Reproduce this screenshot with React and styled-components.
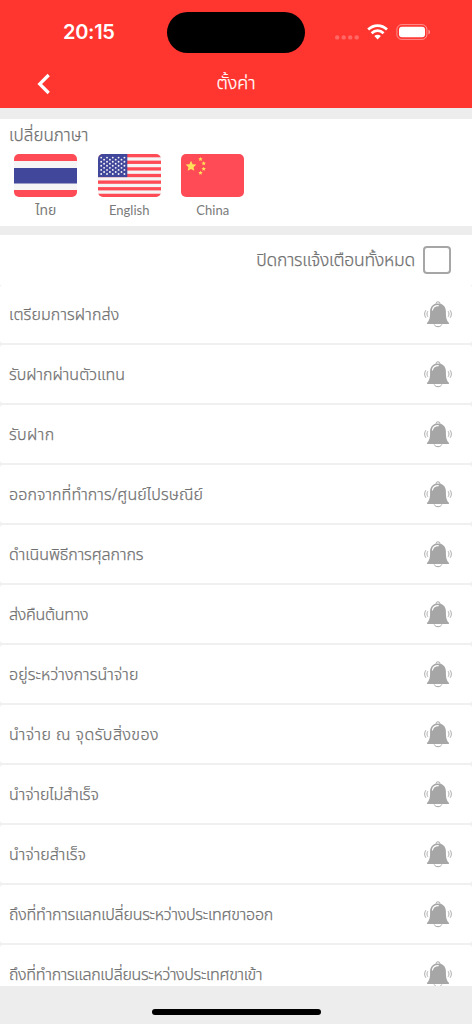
import React from 'react';
import styled, { createGlobalStyle } from 'styled-components';

const GlobalStyle = createGlobalStyle`
  * {
    box-sizing: border-box;
  }

  body {
    margin: 0;
    background: #ededed;
    font-family: 'Noto Sans Thai', 'Noto Sans', 'Lato', sans-serif;
    font-weight: 300;
    color: #707070;
  }
`;

const Screen = styled.div`
  display: flex;
  flex-direction: column;
  height: 1024px;
  overflow: hidden;
  background: #ededed;
`;

const Header = styled.header`
  flex: none;
  height: 107.5px;
  background: #ff3530;
  color: white;
`;

const StatusBar = styled.div`
  display: grid;
  grid-template-columns: 167px 138px 1fr;
  height: 65px;
`;

const Clock = styled.div`
  padding: 20px 0 0 63px;
  font: 600 20px/25px 'Inter', sans-serif;
  letter-spacing: -0.3px;
`;

const Island = styled.div`
  height: 41px;
  margin-top: 12px;
  border-radius: 21px;
  background: black;
`;

const StatusIcons = styled.svg`
  width: 100px;
  height: 20px;
  margin: 22px 0 0 29px;
`;

const TitleBar = styled.div`
  display: grid;
  grid-template-columns: 60px 1fr 60px;
  align-items: center;
  height: 38px;
`;

const BackButton = styled.button`
  display: flex;
  padding: 0 0 0 36px;
  border: none;
  background: none;
  color: white;
`;

const Title = styled.h1`
  margin: 0;
  font-size: 18px;
  font-weight: 300;
  line-height: 28px;
  text-align: center;
  -webkit-text-stroke: 0.25px;
`;

const Label = styled.span`
  padding-top: 1px;
  font-size: ${(props) => props.$size || 16}px;
  line-height: 24px;
  white-space: nowrap;
  letter-spacing: ${(props) => props.$spacing || 0}px;
  -webkit-text-stroke: 0.25px;
`;

const LanguagePanel = styled.section`
  display: flex;
  flex: none;
  flex-direction: column;
  height: 107.5px;
  margin-top: 11px;
  padding: 4.5px 9px 0;
  background: white;
`;

const Languages = styled.div`
  display: flex;
  gap: 20px;
  margin: 6px 0 0 5px;
`;

const Language = styled.div`
  display: flex;
  flex-direction: column;
  align-items: center;
  width: 63.5px;
  color: #7a7a7a;
  font: 400 ${(props) => props.$size || 13}px/22px 'Lato', 'Noto Sans Thai', sans-serif;
`;

const Flag = styled.svg`
  width: 63px;
  height: 43px;
  margin-bottom: 2px;
  border-radius: 5px;
`;

const MuteAll = styled.label`
  display: flex;
  flex: none;
  justify-content: flex-end;
  align-items: center;
  gap: 8px;
  height: 50px;
  margin-top: 9px;
  padding-right: 21px;
  background: white;

  ${Label} {
    padding-top: 2px;
  }
`;

const CheckBox = styled.span`
  width: 28px;
  height: 28px;
  border: 2px solid #a6a6a6;
  border-radius: 4px;
`;

const List = styled.div`
  flex: none;
  height: 701px;
  overflow: hidden;
  background: #f0f0f0;
`;

const Row = styled.div`
  display: flex;
  justify-content: space-between;
  align-items: center;
  height: 58px;
  margin-bottom: 2px;
  padding: 0 20px 0 9px;
  border-radius: 3px;
  background: white;
`;

const Bell = styled.svg`
  flex: none;
  width: 28px;
  height: 27px;
`;

const HomeArea = styled.footer`
  display: flex;
  flex: 1;
  justify-content: center;
  padding-top: 23px;
`;

const HomeIndicator = styled.div`
  width: 169px;
  height: 6px;
  border-radius: 3px;
  background: black;
`;

const notifications = [
  { text: 'เตรียมการฝากส่ง', spacing: 0.12 },
  { text: 'รับฝากผ่านตัวแทน', spacing: 0 },
  { text: 'รับฝาก', spacing: 0.4 },
  { text: 'ออกจากที่ทำการ/ศูนย์ไปรษณีย์', spacing: 0.1 },
  { text: 'ดำเนินพิธีการศุลกากร', spacing: -0.07 },
  { text: 'ส่งคืนต้นทาง', spacing: -0.25 },
  { text: 'อยู่ระหว่างการนำจ่าย', spacing: 0.1 },
  { text: 'นำจ่าย ณ จุดรับสิ่งของ', spacing: 0.46 },
  { text: 'นำจ่ายไม่สำเร็จ', spacing: -0.1 },
  { text: 'นำจ่ายสำเร็จ', spacing: 0.05 },
  { text: 'ถึงที่ทำการแลกเปลี่ยนระหว่างประเทศขาออก', spacing: -0.23 },
  { text: 'ถึงที่ทำการแลกเปลี่ยนระหว่างประเทศขาเข้า', spacing: -0.31 }
];

const starPoints = (cx, cy, r) =>
  Array.from({ length: 10 }, (_, i) => {
    const angle = (Math.PI / 5) * i - Math.PI / 2;
    const radius = i % 2 ? r * 0.48 : r;
    return `${cx + Math.cos(angle) * radius},${cy + Math.sin(angle) * radius}`;
  }).join(' ');

const ThaiFlag = () => (
  <Flag viewBox='0 0 63 43'>
    <rect width='63' height='43' fill='#ff4b55' />
    <rect y='7' width='63' height='29' fill='#f5f5f5' />
    <rect y='14' width='63' height='15.5' fill='#41479b' />
  </Flag>
);

const UsaFlag = () => (
  <Flag viewBox='0 0 63 43'>
    <rect width='63' height='43' fill='#f5f5f5' />
    {[0, 1, 2, 3, 4, 5, 6].map((i) => (
      <rect key={i} y={i * 6.62} width='63' height='3.31' fill='#ff4b55' />
    ))}
    <rect width='29.3' height='23.1' fill='#41479b' />
    {[0, 1, 2, 3, 4, 5, 6, 7, 8].map((row) =>
      Array.from({ length: row % 2 ? 4 : 5 }, (_, i) => (
        <circle
          key={`${row}-${i}`}
          cx={3.2 + i * 5.8 + (row % 2 ? 2.9 : 0)}
          cy={3.6 + row * 2.05}
          r='0.95'
          fill='#f5f5f5'
        />
      ))
    )}
  </Flag>
);

const ChinaFlag = () => (
  <Flag viewBox='0 0 63 43'>
    <rect width='63' height='43' fill='#ff4b55' />
    <g fill='#ffe15a'>
      <polygon points={starPoints(10, 12.3, 5.6)} />
      <polygon points={starPoints(19.5, 5.2, 2.3)} />
      <polygon points={starPoints(22.7, 9.5, 2.3)} />
      <polygon points={starPoints(22.7, 15, 2.3)} />
      <polygon points={starPoints(19.5, 19, 2.3)} />
    </g>
  </Flag>
);

const BellIcon = () => (
  <Bell viewBox='1 1 28 27' fill='none' stroke='#a6a6a6'>
    <circle cx='15' cy='3.8' r='2' />
    <path d='M11.2 24.4c.7 1.7 2.1 2.3 3.8 2.3s3.1-.6 3.8-2.3' />
    <path
      d='M15 3.4c-4.9 0-7.9 3.3-7.9 7.8 0 5.6-.2 8.5-3 11.6v1.2h21.8v-1.2c-2.8-3.1-3-6-3-11.6 0-4.5-3-7.8-7.9-7.8z'
      fill='#a6a6a6'
      stroke='none'
    />
    <path d='M9.5 10c.4-3 2.5-4.3 5.7-4.3' stroke='white' strokeWidth='1.2' strokeLinecap='round' />
    <path
      d='M4.9 11.2c-1.2 1.8-1.2 3.8 0 5.6M2.9 10.2c-1.700 2.400-1.700 5.200 0 7.600M25.100 11.200c1.200 1.800 1.200 3.800 0 5.600M27.100 10.200c1.700 2.400 1.700 5.200 0 7.600'
      strokeWidth='0.9'
    />
  </Bell>
);

const App = () => {
  return (
    <Screen>
      <GlobalStyle />
      <Header>
        <StatusBar>
          <Clock>20:15</Clock>
          <Island />
          <StatusIcons viewBox='0 0 100 20' fill='white'>
            <g opacity='0.25'>
              <circle cx='3.2' cy='15.4' r='2.2' />
              <circle cx='9.7' cy='15.4' r='2.2' />
              <circle cx='16.2' cy='15.4' r='2.2' />
              <circle cx='22.7' cy='15.4' r='2.2' />
            </g>
            <g fill='none' stroke='white' strokeWidth='2.8'>
              <path d='M34.2 7.6c5.4-5.2 13.4-5.2 18.8 0' />
              <path d='M37.6 11.2c3.6-3.3 8.4-3.3 12 0' />
            </g>
            <path d='M40.3 13.9c2-1.7 4.6-1.7 6.6 0l-3.3 3.5z' />
            <rect x='62.9' y='2.6' width='30' height='14.8' rx='4.8' fill='none' stroke='white' opacity='0.45' />
            <rect x='65' y='4.7' width='26' height='10.6' rx='3' />
            <path d='M94.5 7.7c2 .7 2 4 0 4.7z' opacity='0.5' />
          </StatusIcons>
        </StatusBar>
        <TitleBar>
          <BackButton aria-label='Back'>
            <svg width='16' height='22' viewBox='0 0 16 22' fill='none' stroke='white' strokeWidth='3.2'>
              <path d='M12.7 2l-9 9 9 9' />
            </svg>
          </BackButton>
          <Title>ตั้งค่า</Title>
        </TitleBar>
      </Header>
      <LanguagePanel>
        <Label $size={17}>เปลี่ยนภาษา</Label>
        <Languages>
          <Language $size={14}>
            <ThaiFlag />
            ไทย
          </Language>
          <Language>
            <UsaFlag />
            English
          </Language>
          <Language>
            <ChinaFlag />
            China
          </Language>
        </Languages>
      </LanguagePanel>
      <MuteAll>
        <Label $size={17.5} $spacing={-0.2}>ปิดการแจ้งเตือนทั้งหมด</Label>
        <CheckBox />
      </MuteAll>
      <List>
        {notifications.map(({ text, spacing }) => (
          <Row key={text}>
            <Label $spacing={spacing}>{text}</Label>
            <BellIcon />
          </Row>
        ))}
      </List>
      <HomeArea>
        <HomeIndicator />
      </HomeArea>
    </Screen>
  );
};

export default App;
